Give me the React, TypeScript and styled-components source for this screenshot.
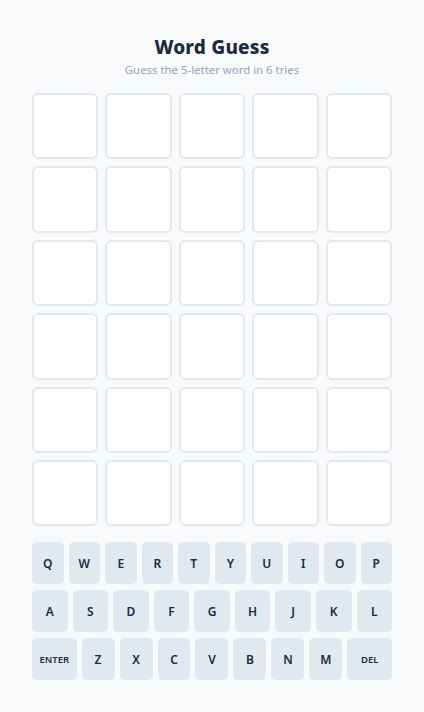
import styled, { createGlobalStyle } from "styled-components";

const GlobalStyle = createGlobalStyle`
  html, body {
    margin: 0;
    padding: 0;
    background: #f8fafc;
  }
  body {
    font-family: "Noto Sans", "Open Sans", sans-serif;
  }
`;

const ROWS = 6;
const COLS = 5;

const KEY_ROWS = [
  ["Q", "W", "E", "R", "T", "Y", "U", "I", "O", "P"],
  ["A", "S", "D", "F", "G", "H", "J", "K", "L"],
  ["ENTER", "Z", "X", "C", "V", "B", "N", "M", "DEL"]
];

const App = () => {
  return (
    <>
      <GlobalStyle />
      <Page>
        <Header>
          <Title>Word Guess</Title>
          <Subtitle>Guess the 5-letter word in 6 tries</Subtitle>
        </Header>
        <Board>
          {Array.from({ length: ROWS * COLS }).map((_, i) => (
            <Tile key={i} />
          ))}
        </Board>
        <Keyboard>
          {KEY_ROWS.map((row, r) => (
            <KeyRow key={r}>
              {row.map((k) => (
                <Key key={k} $wide={k.length > 1}>
                  {k}
                </Key>
              ))}
            </KeyRow>
          ))}
        </Keyboard>
      </Page>
    </>
  );
};

const Page = styled.div`
  width: 360px;
  margin: 0 auto;
  padding-top: 35px;
  display: flex;
  flex-direction: column;
`;

const Header = styled.header`
  display: flex;
  flex-direction: column;
  align-items: center;
  gap: 3px;
`;

const Title = styled.h1`
  margin: 0;
  font-size: 19px;
  line-height: 24px;
  font-weight: 800;
  color: #1e293b;
  letter-spacing: 0.2px;
`;

const Subtitle = styled.p`
  margin: 0;
  font-size: 11.4px;
  line-height: 16px;
  color: #94a3b8;
`;

const Board = styled.div`
  margin-top: 15px;
  display: grid;
  grid-template-columns: repeat(5, 1fr);
  gap: 7px;
`;

const Tile = styled.div`
  box-sizing: border-box;
  aspect-ratio: 1 / 1;
  background: #ffffff;
  border: 2px solid #e2e8f0;
  border-radius: 6px;
`;

const Keyboard = styled.div`
  margin-top: 16px;
  display: flex;
  flex-direction: column;
  gap: 6px;
`;

const KeyRow = styled.div`
  display: flex;
  gap: 5px;
`;

const Key = styled.button<{ $wide?: boolean }>`
  flex: ${({ $wide }) => ($wide ? 1.35 : 1)};
  min-width: 0;
  height: 42px;
  padding: 0;
  border: none;
  border-radius: 5px;
  background: #e2e8f0;
  color: #1e293b;
  font-family: "Noto Sans", "Open Sans", sans-serif;
  font-weight: 600;
  font-size: ${({ $wide }) => ($wide ? "9.5px" : "12px")};
  display: flex;
  align-items: center;
  justify-content: center;
  cursor: pointer;
`;

export default App;
